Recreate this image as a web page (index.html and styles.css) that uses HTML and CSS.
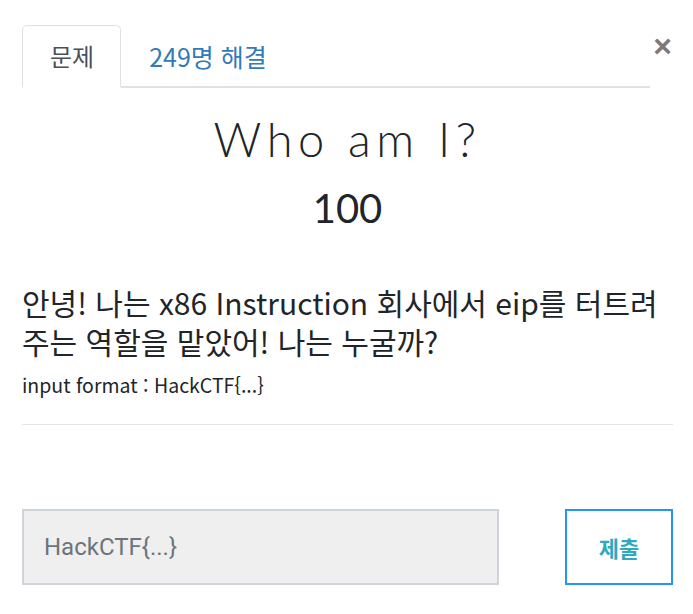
FILE: index.html
```html
<!DOCTYPE html>
<html lang="ko">
<head>
<meta charset="utf-8">
<link rel="stylesheet" href="styles.css">
</head>
<body>
<div class="modal">
  <div class="header">
    <ul class="tabs">
      <li class="tab active">문제</li>
      <li class="tab link">249명 해결</li>
    </ul>
    <button class="close" type="button">&times;</button>
  </div>
  <div class="heading">
    <h1 class="title">Who am I?</h1>
    <div class="points">100</div>
  </div>
  <div class="desc">
    <p class="lead">안녕! 나는 x86 Instruction 회사에서 eip를 터트려 주는 역할을 맡았어! 나는 누굴까?</p>
    <p class="format">input format : HackCTF{...}</p>
  </div>
  <hr class="rule">
  <form class="answer">
    <input class="flag" type="text" placeholder="HackCTF{...}">
    <button class="submit" type="button">제출</button>
  </form>
</div>
</body>
</html>
```
FILE: styles.css
```css
html, body {
  margin: 0;
  padding: 0;
  background: #fff;
}
.modal {
  padding: 25px 20px 0 22px;
  font-family: "Noto Sans CJK KR", "Noto Sans", sans-serif;
  color: #212529;
}
.header {
  display: flex;
  align-items: flex-start;
}
.tabs {
  flex: 1;
  display: flex;
  list-style: none;
  margin: 0;
  padding: 0;
  border-bottom: 2px solid #dee2e6;
}
.tab {
  font-size: 24px;
  line-height: 30px;
  padding: 15px 26px 15px 27px;
  margin-bottom: -2px;
  border: 1px solid transparent;
  border-top-left-radius: 5px;
  border-top-right-radius: 5px;
}
.tab.active {
  color: #495057;
  border-color: #dee2e6 #dee2e6 #fff;
  border-bottom: 2px solid #fff;
}
.tab.link {
  color: #337ab7;
  font-size: 25px;
}
.close {
  width: 21px;
  margin: 6px 0 0 2px;
  padding: 0;
  border: 0;
  background: none;
  font-family: "Liberation Sans", Arial, sans-serif;
  font-size: 32px;
  font-weight: bold;
  line-height: 30px;
  color: #7a7a7a;
}
.heading {
  text-align: center;
  margin-top: 23px;
}
.title {
  margin: 0;
  font-family: "Lato", sans-serif;
  font-weight: 300;
  font-size: 47px;
  letter-spacing: 5.5px;
  line-height: 56px;
  color: #212529;
}
.points {
  font-family: "Lato", sans-serif;
  font-size: 40px;
  line-height: 50px;
  margin-top: 16px;
  color: #212529;
}
.desc {
  margin-top: 50px;
}
.lead {
  margin: 0;
  font-size: 30px;
  line-height: 39px;
  word-break: keep-all;
  color: #212529;
}
.format {
  margin: 10px 0 0 0;
  font-size: 19.5px;
  line-height: 28px;
  color: #212529;
}
.rule {
  margin: 25px 0 0 0;
  border: 0;
  border-top: 1px solid #e5e5e5;
}
.answer {
  display: flex;
  justify-content: space-between;
  margin-top: 84px;
}
.flag {
  width: 477px;
  height: 76px;
  box-sizing: border-box;
  border: 2px solid #ced4da;
  background: #efefef;
  padding: 0 20px;
  font-family: "Roboto", "Liberation Sans", sans-serif;
  font-size: 24px;
  color: #495057;
}
.flag::placeholder {
  color: #6c757d;
}
.submit {
  width: 108px;
  height: 76px;
  box-sizing: border-box;
  border: 2px solid #2196f3;
  background: #fff;
  font-family: "Noto Sans CJK KR", sans-serif;
  font-weight: bold;
  font-size: 22px;
  color: #2ea9c1;
}
```
